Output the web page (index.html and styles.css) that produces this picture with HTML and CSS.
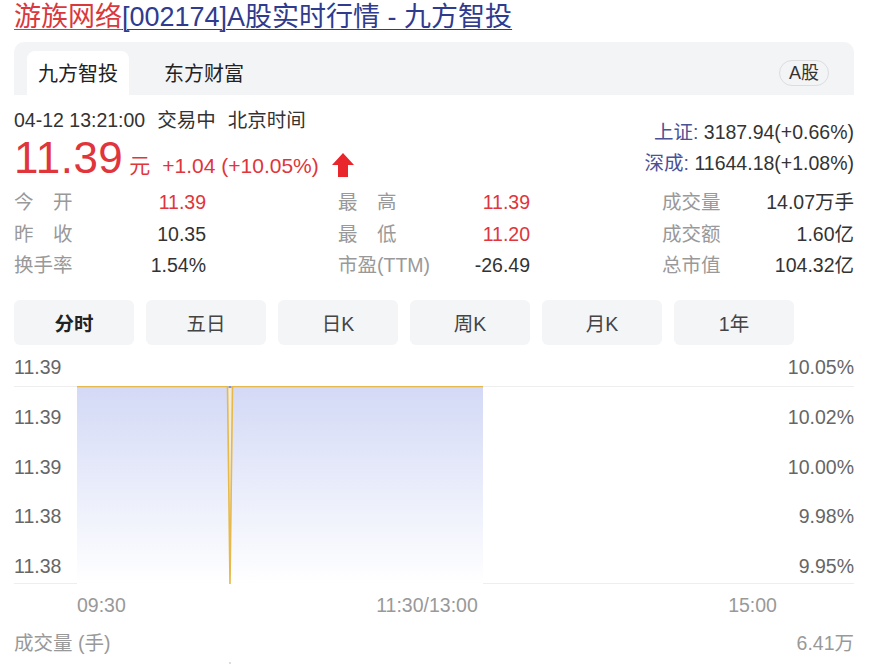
FILE: index.html
```html
<!DOCTYPE html>
<html lang="zh-CN">
<head>
    <meta charset="UTF-8">
    <meta name="viewport" content="width=device-width, initial-scale=1.0">
    <title>游族网络[002174]A股实时行情 - 九方智投</title>
    <link rel="stylesheet" href="styles.css">
</head>
<body>
    <div class="page">
        <h1 class="title"><a href="#" class="title-name">游族网络</a><a href="#" class="title-rest">[002174]A股实时行情 - 九方智投</a></h1>

        <div class="tabs">
            <div class="tab active">九方智投</div>
            <div class="tab">东方财富</div>
            <span class="pill">A股</span>
        </div>

        <div class="quote">
            <div class="quote-main">
                <div class="time-line">04-12 13:21:00<span class="gap">交易中</span><span class="gap">北京时间</span></div>
                <div class="price-line">
                    <span class="price">11.39</span>
                    <span class="unit">元</span>
                    <span class="change">+1.04 (+10.05%)</span>
                    <svg class="arrow" width="22" height="24" viewBox="0 0 22 24">
                        <path d="M11 0 L22 12 H16 V24 H6 V12 H0 Z" fill="#e8262c"/>
                    </svg>
                </div>
            </div>
            <div class="index-list">
                <div><span class="index-name">上证:</span> 3187.94(+0.66%)</div>
                <div><span class="index-name">深成:</span> 11644.18(+1.08%)</div>
            </div>
        </div>

        <div class="stats">
            <div class="stat"><span class="label">今&emsp;开</span><span class="value up">11.39</span></div>
            <div class="stat"><span class="label">最&emsp;高</span><span class="value up">11.39</span></div>
            <div class="stat"><span class="label">成交量</span><span class="value">14.07万手</span></div>
            <div class="stat"><span class="label">昨&emsp;收</span><span class="value">10.35</span></div>
            <div class="stat"><span class="label">最&emsp;低</span><span class="value up">11.20</span></div>
            <div class="stat"><span class="label">成交额</span><span class="value">1.60亿</span></div>
            <div class="stat"><span class="label">换手率</span><span class="value">1.54%</span></div>
            <div class="stat"><span class="label">市盈(TTM)</span><span class="value">-26.49</span></div>
            <div class="stat"><span class="label">总市值</span><span class="value">104.32亿</span></div>
        </div>

        <div class="periods">
            <button class="period active">分时</button>
            <button class="period">五日</button>
            <button class="period">日K</button>
            <button class="period">周K</button>
            <button class="period">月K</button>
            <button class="period">1年</button>
        </div>

        <div class="chart">
            <div class="axis-row head"><span>11.39</span><span>10.05%</span></div>
            <div class="plot">
                <div class="axis-row"><span>11.39</span><span>10.02%</span></div>
                <div class="axis-row"><span>11.39</span><span>10.00%</span></div>
                <div class="axis-row"><span>11.38</span><span>9.98%</span></div>
                <div class="axis-row"><span>11.38</span><span>9.95%</span></div>
                <svg class="plot-lines" width="700" height="198" viewBox="0 0 700 198">
                    <defs>
                        <linearGradient id="fill" x1="0" y1="0" x2="0" y2="1">
                            <stop offset="0" stop-color="#d3d9f6"/>
                            <stop offset="1" stop-color="#ffffff"/>
                        </linearGradient>
                    </defs>
                    <rect x="0" y="0" width="406" height="198" fill="url(#fill)"/>
                    <polygon points="150.5,0 155.5,0 153,198" fill="#f3ecd9"/>
                    <polyline points="0,0.5 150.5,0.5 153,198 155.5,0.5 406,0.5" fill="none" stroke="#e6b94a" stroke-width="1.6"/>
                    <rect x="151.5" y="0" width="3" height="2" fill="#8c93c8"/>
                </svg>
            </div>
            <div class="time-axis"><span>09:30</span><span>11:30/13:00</span><span>15:00</span></div>
        </div>

        <div class="volume-head"><span>成交量 (手)</span><span>6.41万</span></div>
        <div class="volume-plot"><span class="vol-bar"></span></div>
    </div>
</body>
</html>
```

FILE: styles.css
```css
body {
    margin: 0;
    font-family: "Liberation Sans", "Noto Sans CJK SC", sans-serif;
    font-size: 19.5px;
    color: #333;
    background: #fff;
}
.page {
    width: 840px;
    padding-left: 14px;
}
.title {
    margin: 0;
    font-size: 27px;
    font-weight: normal;
    line-height: 34px;
    white-space: nowrap;
}
.title a {
    text-decoration: underline;
    text-underline-offset: 3px;
    text-decoration-thickness: 1px;
}
.title-name {
    color: #d9383c;
}
.title-rest {
    color: #2f3b8e;
}
.tabs {
    display: flex;
    align-items: center;
    height: 44px;
    margin-top: 8px;
    padding: 9px 25px 0 13px;
    background: #f3f4f6;
    border-radius: 10px 10px 0 0;
}
.tab {
    align-self: stretch;
    display: flex;
    align-items: center;
    padding: 0 11px 2px;
    font-size: 20px;
    color: #222;
    border-radius: 8px 8px 0 0;
}
.tab + .tab {
    margin-left: 24px;
}
.tab.active {
    background: #fff;
}
.pill {
    margin-left: auto;
    padding: 0 9px;
    height: 24px;
    line-height: 24px;
    border: 1px solid #dcdde0;
    border-radius: 13px;
    font-size: 18px;
    color: #333;
}
.quote {
    display: flex;
    justify-content: space-between;
}
.time-line {
    margin-top: 11px;
    line-height: 28px;
}
.gap {
    margin-left: 12px;
}
.price-line {
    display: flex;
    align-items: baseline;
    height: 48px;
    line-height: 48px;
    color: #e0353b;
}
.price {
    font-size: 44px;
    letter-spacing: 0.5px;
}
.unit {
    margin-left: 6px;
    font-size: 21px;
}
.change {
    margin-left: 12px;
    font-size: 21px;
}
.arrow {
    margin: 19px 0 0 13px;
    align-self: flex-start;
}
.index-list {
    margin-top: 22px;
    text-align: right;
    line-height: 31px;
    font-size: 19.5px;
}
.index-name {
    color: #4c5196;
}
.stats {
    display: grid;
    grid-template-columns: repeat(3, 1fr);
    column-gap: 132px;
    margin-top: 5px;
}
.stat {
    display: flex;
    justify-content: space-between;
    line-height: 31.5px;
}
.label {
    color: #999;
}
.value.up {
    color: #e0353b;
}
.periods {
    display: flex;
    gap: 12px;
    margin-top: 18px;
}
.period {
    width: 120px;
    height: 45px;
    border: 0;
    border-radius: 6px;
    background: #f4f5f7;
    font-family: inherit;
    font-size: 19.5px;
    color: #444;
}
.period.active {
    font-weight: bold;
    color: #222;
}
.chart {
    margin-top: 10px;
    color: #666;
    font-size: 19.5px;
}
.axis-row {
    display: flex;
    justify-content: space-between;
    align-items: flex-end;
    height: 49.5px;
    padding-bottom: 7px;
    box-sizing: border-box;
    line-height: 24px;
}
.axis-row.head {
    height: 31px;
}
.plot {
    position: relative;
    height: 198px;
    border-top: 1px solid #eeeeee;
    border-bottom: 1px solid #eeeeee;
    box-sizing: border-box;
}
.plot-lines {
    position: absolute;
    left: 63px;
    top: -1px;
}
.time-axis {
    display: flex;
    justify-content: space-between;
    width: 700px;
    margin: 8px 0 0 63px;
    line-height: 26px;
    color: #999;
}
.volume-head {
    display: flex;
    justify-content: space-between;
    margin-top: 10px;
    line-height: 30px;
    color: #999;
}
.volume-plot {
    position: relative;
    height: 10px;
}
.vol-bar {
    position: absolute;
    left: 215px;
    top: 4px;
    width: 2px;
    height: 6px;
    background: #ddd;
}
```
